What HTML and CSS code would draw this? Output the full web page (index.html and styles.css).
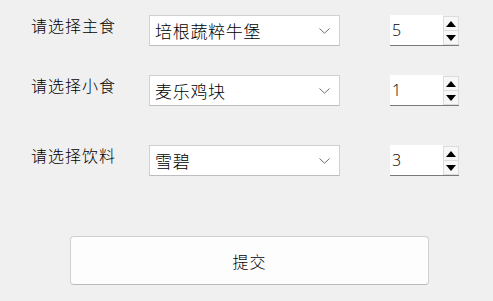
FILE: index.html
```html
<!DOCTYPE html>
<html lang="zh">
<head>
<meta charset="utf-8">
<link rel="stylesheet" href="styles.css">
</head>
<body>
<div class="form">
  <div class="row row1">
    <div class="label">请选择主食</div>
    <div class="combo"><span class="value">培根蔬粹牛堡</span><span class="chev"><svg width="11" height="6" viewBox="0 0 11 6"><path d="M0.5 0.5 L5.5 5.2 L10.5 0.5" fill="none" stroke="#6e6e6e" stroke-width="1"/></svg></span></div>
    <div class="spin"><span class="num">5</span><div class="btns"><div class="btn up"><span class="tri-up"></span></div><div class="btn down"><span class="tri-down"></span></div></div></div>
  </div>
  <div class="row row2">
    <div class="label">请选择小食</div>
    <div class="combo"><span class="value">麦乐鸡块</span><span class="chev"><svg width="11" height="6" viewBox="0 0 11 6"><path d="M0.5 0.5 L5.5 5.2 L10.5 0.5" fill="none" stroke="#6e6e6e" stroke-width="1"/></svg></span></div>
    <div class="spin"><span class="num">1</span><div class="btns"><div class="btn up"><span class="tri-up"></span></div><div class="btn down"><span class="tri-down"></span></div></div></div>
  </div>
  <div class="row row3">
    <div class="label">请选择饮料</div>
    <div class="combo"><span class="value">雪碧</span><span class="chev"><svg width="11" height="6" viewBox="0 0 11 6"><path d="M0.5 0.5 L5.5 5.2 L10.5 0.5" fill="none" stroke="#6e6e6e" stroke-width="1"/></svg></span></div>
    <div class="spin"><span class="num">3</span><div class="btns"><div class="btn up"><span class="tri-up"></span></div><div class="btn down"><span class="tri-down"></span></div></div></div>
  </div>
  <div class="submit-wrap">
    <button class="submit">提交</button>
  </div>
</div>
</body>
</html>
```

FILE: styles.css
```css
html, body {
  margin: 0;
  padding: 0;
  background: #f0f0f0;
  width: 493px;
  height: 301px;
  overflow: hidden;
  font-family: "Noto Sans CJK SC", "Noto Sans", sans-serif;
  color: #000;
}
.form {
  display: flex;
  flex-direction: column;
  padding-top: 15px;
}
.row {
  display: flex;
  align-items: flex-start;
  height: 31px;
  padding-left: 31px;
}
.row2 { margin-top: 29px; }
.row3 { margin-top: 39px; }
.label {
  width: 118px;
  font-size: 16px;
  line-height: 16px;
  letter-spacing: 1px;
  font-weight: 300;
  margin-top: 2px;
  white-space: nowrap;
}
.row2 .label { margin-top: 2px; }
.combo {
  box-sizing: border-box;
  width: 191px;
  height: 31px;
  background: #fff;
  border: 1px solid #d0d0d0;
  border-bottom-color: #bdbdbd;
  display: flex;
  align-items: center;
  justify-content: space-between;
  padding: 0 9px 0 5px;
}
.value {
  font-size: 17px;
  line-height: 17px;
  letter-spacing: 0.7px;
  font-weight: 300;
  margin-top: -1px;
  white-space: nowrap;
}
.chev {
  display: flex;
  margin-top: 1px;
}
.spin {
  margin-left: 50px;
  box-sizing: border-box;
  width: 69px;
  height: 31px;
  background: #fff;
  border-bottom: 1px solid #7a7a7a;
  display: flex;
  justify-content: space-between;
}
.num {
  font-family: "Open Sans", "Liberation Sans", sans-serif;
  font-weight: 300;
  font-size: 16px;
  line-height: 30px;
  padding-left: 2px;
}
.btns {
  width: 16px;
  display: flex;
  flex-direction: column;
  background: #f0f0f0;
  padding: 1px 0 0 0;
}
.btn {
  box-sizing: border-box;
  flex: 1;
  border: 1px solid #dcdcdc;
  background: #f7f7f7;
  display: flex;
  align-items: center;
  justify-content: center;
}
.btn.down { border-top: none; }
.tri-up {
  width: 0;
  height: 0;
  border-left: 5px solid transparent;
  border-right: 5px solid transparent;
  border-bottom: 6px solid #000;
}
.tri-down {
  width: 0;
  height: 0;
  border-left: 5px solid transparent;
  border-right: 5px solid transparent;
  border-top: 6px solid #000;
}
.submit-wrap {
  display: flex;
  padding-left: 70px;
  margin-top: 60px;
}
.submit {
  box-sizing: border-box;
  width: 359px;
  height: 49px;
  background: #fdfdfd;
  border: 1px solid #d0d0d0;
  border-bottom-color: #bcbcbc;
  border-radius: 4px;
  font-family: "Noto Sans CJK SC", "Noto Sans", sans-serif;
  font-weight: 300;
  font-size: 16px;
  color: #000;
  padding: 0;
  letter-spacing: 1px;
}
```
